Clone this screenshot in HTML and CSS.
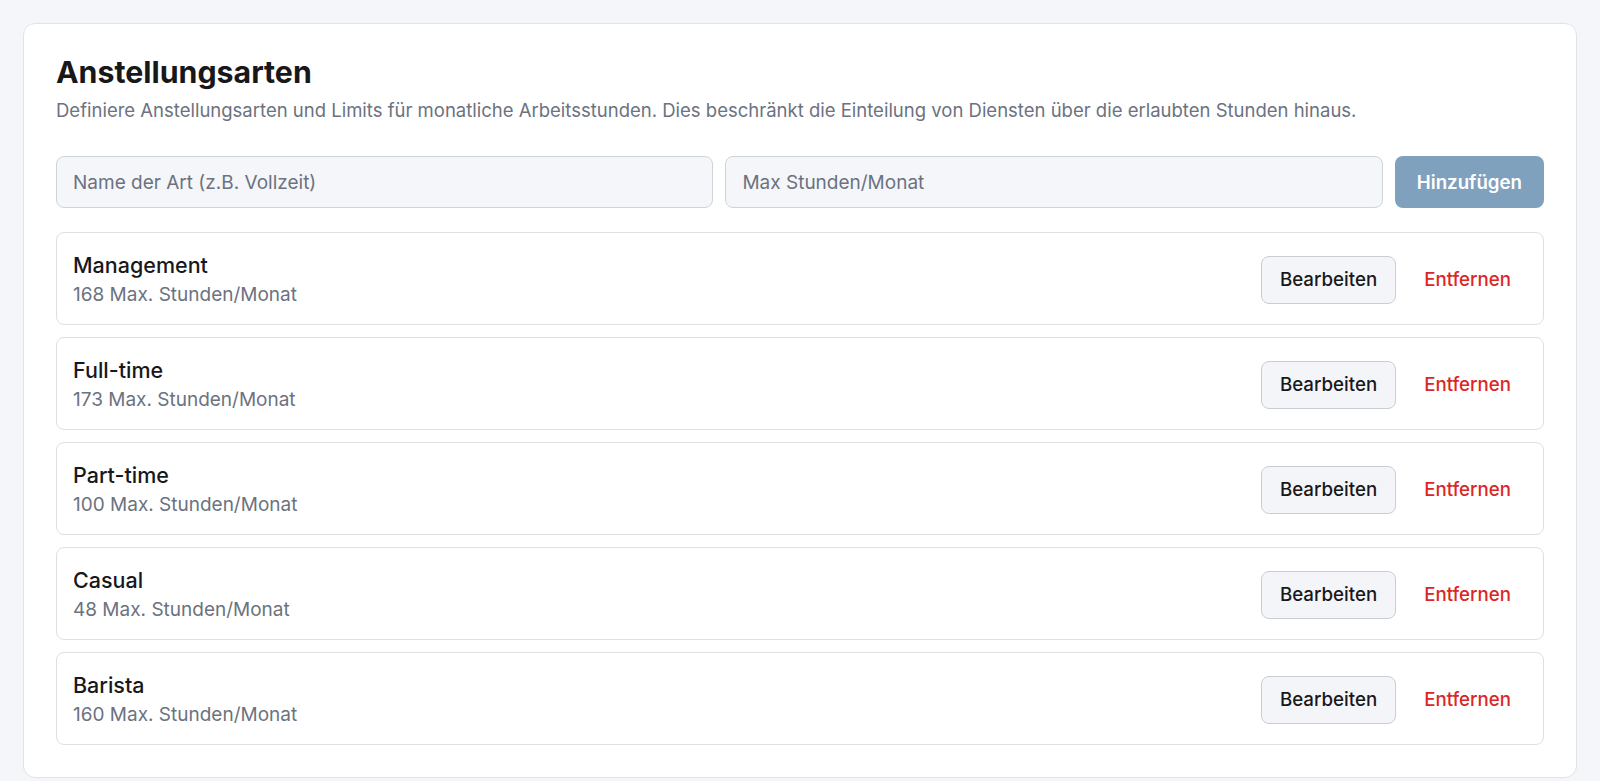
FILE: index.html
```html
<!DOCTYPE html>
<html lang="de">
<head>
    <meta charset="UTF-8">
    <meta name="viewport" content="width=device-width, initial-scale=1.0">
    <title>Anstellungsarten</title>
    <link rel="stylesheet" href="styles.css">
</head>
<body>
    <div class="card">
        <h1>Anstellungsarten</h1>
        <p class="subtitle">Definiere Anstellungsarten und Limits für monatliche Arbeitsstunden. Dies beschränkt die Einteilung von Diensten über die erlaubten Stunden hinaus.</p>

        <div class="add-form">
            <input type="text" placeholder="Name der Art (z.B. Vollzeit)">
            <input type="number" placeholder="Max Stunden/Monat">
            <button class="btn-add" disabled>Hinzufügen</button>
        </div>

        <div class="type-list">
            <div class="type-row">
                <div class="type-info">
                    <div class="type-name">Management</div>
                    <div class="type-hours">168 Max. Stunden/Monat</div>
                </div>
                <div class="type-actions">
                    <button class="btn-edit">Bearbeiten</button>
                    <button class="btn-remove">Entfernen</button>
                </div>
            </div>
            <div class="type-row">
                <div class="type-info">
                    <div class="type-name">Full-time</div>
                    <div class="type-hours">173 Max. Stunden/Monat</div>
                </div>
                <div class="type-actions">
                    <button class="btn-edit">Bearbeiten</button>
                    <button class="btn-remove">Entfernen</button>
                </div>
            </div>
            <div class="type-row">
                <div class="type-info">
                    <div class="type-name">Part-time</div>
                    <div class="type-hours">100 Max. Stunden/Monat</div>
                </div>
                <div class="type-actions">
                    <button class="btn-edit">Bearbeiten</button>
                    <button class="btn-remove">Entfernen</button>
                </div>
            </div>
            <div class="type-row">
                <div class="type-info">
                    <div class="type-name">Casual</div>
                    <div class="type-hours">48 Max. Stunden/Monat</div>
                </div>
                <div class="type-actions">
                    <button class="btn-edit">Bearbeiten</button>
                    <button class="btn-remove">Entfernen</button>
                </div>
            </div>
            <div class="type-row">
                <div class="type-info">
                    <div class="type-name">Barista</div>
                    <div class="type-hours">160 Max. Stunden/Monat</div>
                </div>
                <div class="type-actions">
                    <button class="btn-edit">Bearbeiten</button>
                    <button class="btn-remove">Entfernen</button>
                </div>
            </div>
        </div>
    </div>
</body>
</html>
```

FILE: styles.css
```css
body {
    margin: 0;
    padding: 23px;
    background-color: #f5f6f9;
    font-family: Inter, "Noto Sans", sans-serif;
    color: #18181b;
}

.card {
    background: #ffffff;
    border: 1px solid #e1e3e8;
    border-radius: 12px;
    padding: 32px;
}

h1 {
    margin: 0;
    font-size: 30.3px;
    line-height: 32px;
    font-weight: 700;
    color: #18181b;
}

.subtitle {
    margin: 8px 0 0;
    font-size: 18.5px;
    line-height: 28px;
    color: #6b7280;
}

.add-form {
    display: grid;
    grid-template-columns: 1fr 1fr auto;
    gap: 12px;
    margin-top: 32px;
}

input {
    height: 52px;
    box-sizing: border-box;
    padding: 0 16px;
    background: #f5f6fa;
    border: 1px solid #cfd3da;
    border-radius: 8px;
    font-family: inherit;
    font-size: 19px;
    color: #18181b;
}

input::placeholder {
    color: #6b7280;
}

button {
    font-family: inherit;
    font-size: 18.7px;
    font-weight: 500;
    cursor: pointer;
}

.btn-add {
    height: 52px;
    padding: 0 22px;
    background: #7fa1bd;
    border: none;
    border-radius: 8px;
    color: #ffffff;
    font-weight: 600;
}

.type-list {
    display: flex;
    flex-direction: column;
    gap: 12px;
    margin-top: 24px;
}

.type-row {
    display: flex;
    justify-content: space-between;
    align-items: center;
    padding: 18px 16px 16px;
    border: 1px solid #dcdfe4;
    border-radius: 8px;
}

.type-name {
    font-size: 21.5px;
    line-height: 28px;
    font-weight: 500;
    color: #18181b;
}

.type-hours {
    margin-top: 3px;
    font-size: 19px;
    line-height: 26px;
    color: #6b7280;
}

.type-actions {
    display: flex;
    align-items: center;
    gap: 12px;
}

.btn-edit {
    height: 48px;
    padding: 0 18px;
    background: #f4f5f9;
    border: 1px solid #c9cdd4;
    border-radius: 8px;
    color: #18181b;
}

.btn-remove {
    height: 48px;
    padding: 0 16px;
    background: transparent;
    border: none;
    color: #dc2626;
}
```
